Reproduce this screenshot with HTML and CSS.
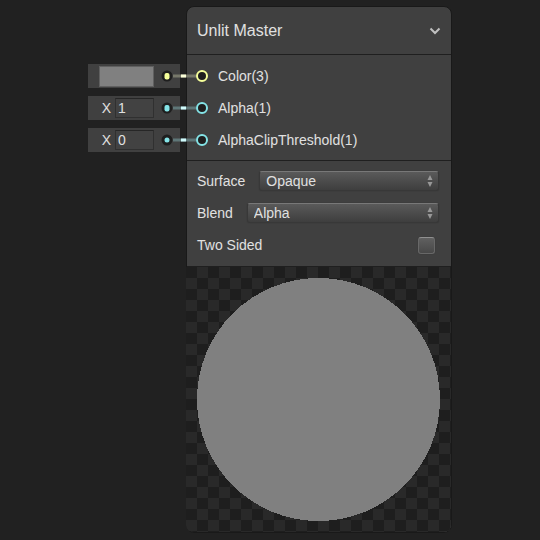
FILE: index.html
```html
<!DOCTYPE html>
<html lang="en">
<head>
<meta charset="utf-8">
<meta name="viewport" content="width=device-width, initial-scale=1">
<title>Unlit Master</title>
<link rel="stylesheet" href="styles.css">
</head>
<body>
<main class="graph">
  <div class="slots">
    <div class="slot vec3">
      <button class="swatch" type="button" aria-label="Color"></button>
      <svg class="wire" width="50" height="16" viewBox="0 0 50 16" aria-hidden="true">
        <circle class="socket" cx="8" cy="8" r="5.5"/>
        <rect class="pin" x="5.500" y="5" width="5" height="6.500" rx="2"/>
        <path class="line" d="M14 8H37"/>
        <path class="spark" d="M22 8H27"/>
      </svg>
    </div>
    <div class="slot vec1">
      <label for="alpha">X</label>
      <input class="number" id="alpha" type="text" value="1">
      <svg class="wire" width="50" height="16" viewBox="0 0 50 16" aria-hidden="true">
        <circle class="socket" cx="8" cy="8" r="5.5"/>
        <rect class="pin" x="5.500" y="5" width="5" height="6.500" rx="2"/>
        <path class="line" d="M14 8H37"/>
        <path class="spark" d="M22 8H27"/>
      </svg>
    </div>
    <div class="slot vec1">
      <label for="clip">X</label>
      <input class="number" id="clip" type="text" value="0">
      <svg class="wire" width="50" height="16" viewBox="0 0 50 16" aria-hidden="true">
        <circle class="socket" cx="8" cy="8" r="5.5"/>
        <circle class="pin" cx="8" cy="8" r="2.500"/>
        <path class="line" d="M14 8H37"/>
        <path class="spark" d="M22 8H27"/>
      </svg>
    </div>
  </div>

  <section class="node">
    <header class="head">
      <h1 class="title">Unlit Master</h1>
      <button class="collapse" type="button" aria-label="Collapse">
        <svg width="12" height="8" viewBox="0 0 12 8" aria-hidden="true"><path d="M1.500 1.500L6 6L10.500 1.500"/></svg>
      </button>
    </header>
    <ul class="ports">
      <li class="port vec3"><span class="ring"></span>Color(3)</li>
      <li class="port vec1"><span class="ring"></span>Alpha(1)</li>
      <li class="port vec1"><span class="ring"></span>AlphaClipThreshold(1)</li>
    </ul>
    <div class="controls">
      <div class="control">
        <label for="surface">Surface</label>
        <div class="picker">
          <select id="surface"><option>Opaque</option><option>Transparent</option></select>
          <svg class="arrows" width="6" height="12" viewBox="0 0 6 12" aria-hidden="true"><path d="M3 0L5.500 5H.5ZM3 12L5.500 7H.5Z"/></svg>
        </div>
      </div>
      <div class="control">
        <label for="blend">Blend</label>
        <div class="picker">
          <select id="blend"><option>Alpha</option><option>Additive</option></select>
          <svg class="arrows" width="6" height="12" viewBox="0 0 6 12" aria-hidden="true"><path d="M3 0L5.500 5H.5ZM3 12L5.500 7H.5Z"/></svg>
        </div>
      </div>
      <div class="control spread">
        <label for="two-sided">Two Sided</label>
        <input class="tick" id="two-sided" type="checkbox">
      </div>
    </div>
    <div class="preview">
      <svg viewBox="0 0 265 265" role="img" aria-label="Preview"><circle cx="132.500" cy="132.500" r="121.500" shape-rendering="crispEdges"/></svg>
    </div>
  </section>
</main>
</body>
</html>
```
FILE: styles.css
```css
* {
  box-sizing: border-box;
}

body {
  margin: 0;
  min-height: 100vh;
  background: #212121;
  color: #e0e0e0;
  font: 14px/20px "Liberation Sans", Arial, sans-serif;
}

button,
input,
select {
  margin: 0;
  font: inherit;
  color: inherit;
  appearance: none;
}

.graph {
  display: flex;
  align-items: flex-start;
  gap: 6px;
  padding: 6px 88px 8px;
}

.vec3 {
  --type: #f6ff9a;
  --spark: #fbffd8;
  --line: #77786a;
}

.vec1 {
  --type: #84e4e7;
  --spark: #d0fbfc;
  --line: #5f7778;
}

/* Default-value slots beside the node */
.slots {
  position: relative;
  z-index: 1;
  display: grid;
  gap: 8px;
  flex: 0 0 92px;
  padding-top: 58px;
}

.slot {
  position: relative;
  display: flex;
  align-items: center;
  justify-content: flex-end;
  gap: 4px;
  height: 24px;
  padding-right: 26px;
  background: #404040;
}

.swatch {
  width: 55px;
  height: 21px;
  padding: 0;
  border: 1px solid #606060;
  background: #808080;
}

.number {
  width: 39px;
  height: 20px;
  padding: 0 2px;
  border: 1px solid #303030;
  border-top-color: #262626;
  background: #424242;
}

.wire {
  position: absolute;
  top: 4px;
  left: 71px;
}

.socket {
  fill: #1e1e1e;
}

.pin {
  fill: var(--type);
}

.line {
  stroke: var(--line);
  stroke-width: 3;
}

.spark {
  stroke: var(--spark);
  stroke-width: 3;
}

/* Node */
.node {
  flex: 1;
  min-width: 0;
  border: 1px solid #191919;
  border-radius: 8px;
  background: #404040;
}

.head {
  display: flex;
  align-items: center;
  justify-content: space-between;
  height: 48px;
  padding: 0 10px;
  border-bottom: 1px solid #1f1f1f;
}

.title {
  margin: 0;
  font-size: 16px;
  font-weight: 400;
}

.collapse {
  display: flex;
  padding: 0;
  border: 0;
  background: none;
}

.collapse path {
  fill: none;
  stroke: #c0c0c0;
  stroke-width: 2;
}

.ports {
  margin: 0;
  padding: 5px 9px 4px;
  border-bottom: 1px solid #1f1f1f;
  list-style: none;
}

.port {
  display: flex;
  align-items: center;
  gap: 10px;
  height: 32px;
}

.ring {
  width: 12px;
  height: 12px;
  border: 2px solid var(--type);
  border-radius: 50%;
  background: #1e1e1e;
}

.controls {
  padding: 4px 12px 5px 10px;
  border-bottom: 1px solid #1f1f1f;
}

.control {
  display: flex;
  align-items: center;
  gap: 14px;
  height: 32px;
}

.spread {
  justify-content: space-between;
  padding-right: 4px;
}

.picker {
  position: relative;
  flex: 1;
}

.picker select {
  display: block;
  width: 100%;
  height: 20px;
  padding: 0 20px 0 6px;
  border: 1px solid #383838;
  border-top-color: #787878;
  border-radius: 3px;
  background: linear-gradient(#5a5a5a, #3e3e3e);
  box-shadow: 0 0 1px #2c2c2c;
  line-height: 16px;
}

.arrows {
  position: absolute;
  top: 4px;
  right: 6px;
  fill: #989898;
  pointer-events: none;
}

.tick {
  width: 17px;
  height: 17px;
  border: 1px solid #686868;
  border-top-color: #909090;
  border-radius: 3px;
  background: linear-gradient(#606060, #484848);
  box-shadow: 0 0 1px #2c2c2c;
}

.preview {
  margin-left: -1px;
  overflow: hidden;
  border-radius: 0 0 7px 7px;
  background: repeating-conic-gradient(#292929 0 25%, #1e1e1e 0 50%) 0 0 / 22px 22px;
}

.preview svg {
  display: block;
  fill: #808080;
}
```
